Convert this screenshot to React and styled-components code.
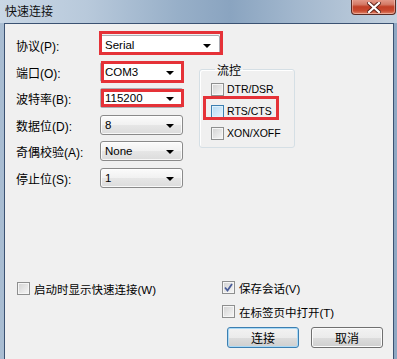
import React from "react"
import styled, { createGlobalStyle, css } from "styled-components"

const GlobalStyle = createGlobalStyle`
  html, body {
    margin: 0;
    padding: 0;
    background: #8ea7c2;
  }
  body {
    font-family: "Liberation Sans", "Noto Sans CJK SC", sans-serif;
    font-size: 12px;
    color: #000;
  }
`

const Combo = ({ value, width, editable, mark }) => (
  <ComboBox $width={width} $editable={editable}>
    <span>{value}</span>
    <Arrow />
    {mark && <RedMark {...mark} />}
  </ComboBox>
)

const CheckBox = ({ label, checked, hot, small, mark }) => (
  <CheckRow $small={small}>
    <Box $hot={hot}>
      {checked && (
        <svg width="9" height="9" viewBox="0 0 9 9">
          <path d="M1 4.5 L3.5 7.5 L8 1" fill="none" stroke="#4a5d99" strokeWidth="1.8" />
        </svg>
      )}
    </Box>
    <span>{label}</span>
    {mark && <RedMark {...mark} />}
  </CheckRow>
)

const App = () => {
  return (
    <Window>
      <GlobalStyle />
      <TitleBar>
        <Title>快速连接</Title>
        <CloseButton>
          <svg width="14" height="11" viewBox="0 0 14 11">
            <path d="M2 1 L12 10 M12 1 L2 10" stroke="#5b2219" strokeWidth="4" strokeLinecap="square" />
            <path d="M2 1 L12 10 M12 1 L2 10" stroke="#fff" strokeWidth="2.2" strokeLinecap="square" />
          </svg>
        </CloseButton>
      </TitleBar>
      <Body>
        <FormGrid>
          <Label>协议(P):</Label>
          <Combo value="Serial" width={120} editable mark={{ left: -2, top: -5, width: 124, height: 24 }} />
          <Label>端口(O):</Label>
          <Combo value="COM3" width={83} editable mark={{ left: 0, top: -2, width: 83, height: 22 }} />
          <Label>波特率(B):</Label>
          <Combo value="115200" width={83} editable mark={{ left: 0, top: 0, width: 83, height: 18 }} />
          <Label>数据位(D):</Label>
          <Combo value="8" width={83} />
          <Label>奇偶校验(A):</Label>
          <Combo value="None" width={83} />
          <Label>停止位(S):</Label>
          <Combo value="1" width={83} />

          <FlowGroup>
            <legend>流控</legend>
            <CheckBox small label="DTR/DSR" />
            <CheckBox small label="RTS/CTS" hot mark={{ left: -8, top: -9, width: 76, height: 24 }} />
            <CheckBox small label="XON/XOFF" />
          </FlowGroup>
        </FormGrid>

        <Bottom>
          <LeftOptions>
            <CheckBox label="启动时显示快速连接(W)" />
          </LeftOptions>
          <RightOptions>
            <CheckBox label="保存会话(V)" checked />
            <CheckBox label="在标签页中打开(T)" />
            <Buttons>
              <Button $primary>连接</Button>
              <Button>取消</Button>
            </Buttons>
          </RightOptions>
        </Bottom>
      </Body>
    </Window>
  )
}

const Window = styled.div`
  width: 397px;
  height: 359px;
  overflow: hidden;
  display: flex;
  flex-direction: column;
  background: linear-gradient(90deg, #a9bdd2 0%, #8fa8c3 100%);
`

const TitleBar = styled.div`
  height: 23px;
  flex: none;
  display: flex;
  justify-content: space-between;
  align-items: flex-start;
  background: linear-gradient(
    90deg,
    #c9d7e5 0%,
    #b8c9db 22%,
    #97afc8 45%,
    #8aa4c0 58%,
    #a3b8ce 75%,
    #c3d1df 100%
  );
`

const Title = styled.div`
  padding: 4px 0 0 5px;
  font-family: "Noto Sans CJK SC", sans-serif;
  font-size: 12px;
  line-height: 14px;
  color: #111;
`

const CloseButton = styled.div`
  width: 45px;
  height: 17px;
  margin: -2px 1px 0 0;
  display: flex;
  align-items: center;
  justify-content: center;
  padding-top: 2px;
  box-sizing: border-box;
  border: 1px solid #5a2a23;
  border-top: none;
  border-radius: 0 0 4px 4px;
  background: linear-gradient(180deg, #e9a596 0%, #d47a66 40%, #c13f26 55%, #c94a30 80%, #e0876c 100%);
  box-shadow: inset 0 0 0 1px rgba(255, 220, 210, 0.45);
`

const Body = styled.div`
  flex: 1;
  margin: 0 3px 0 4px;
  border: 1px solid #3b5272;
  border-bottom: none;
  background: #f0f0f0;
  position: relative;
  display: flex;
  flex-direction: column;
`

const FormGrid = styled.div`
  display: grid;
  grid-template-columns: 84px 99px 96px;
  grid-auto-rows: 20px;
  row-gap: 6.5px;
  padding: 11px 0 0 11px;
`

const Label = styled.div`
  grid-column: 1;
  display: flex;
  align-items: center;
  font-size: 12px;
  white-space: nowrap;
  padding-top: 1px;
`

const ComboBox = styled.div`
  grid-column: 2;
  position: relative;
  width: ${(p) => p.$width}px;
  height: 20px;
  box-sizing: border-box;
  display: flex;
  align-items: center;
  justify-content: space-between;
  padding: 0 8px 0 4px;
  font-family: "Liberation Sans", sans-serif;
  font-size: 11.5px;
  border: 1px solid #8a8a8a;
  border-radius: 3px;
  ${(p) =>
    p.$editable
      ? css`
          background: #fff;
          border-color: #abadb3;
          border-radius: 2px;
        `
      : css`
          background: linear-gradient(180deg, #fbfbfb 0%, #f1f1f1 50%, #e6e6e6 52%, #dcdcdc 100%);
          box-shadow: inset 0 0 0 1px rgba(255, 255, 255, 0.8);
        `}
`

const Arrow = styled.span`
  width: 0;
  height: 0;
  border-left: 4px solid transparent;
  border-right: 4px solid transparent;
  border-top: 4px solid #000;
  margin-top: 2px;
`

const RedMark = styled.span`
  position: absolute;
  left: ${(p) => p.left}px;
  top: ${(p) => p.top}px;
  width: ${(p) => p.width}px;
  height: ${(p) => p.height}px;
  box-sizing: border-box;
  border: 3px solid #e53238;
  pointer-events: none;
`

const FlowGroup = styled.fieldset`
  grid-column: 3;
  grid-row: 2 / span 5;
  align-self: start;
  margin: 1px 0 0 0;
  padding: 6px 0 0 11px;
  height: 85px;
  box-sizing: border-box;
  border: 1px solid #d5dfe5;
  border-radius: 3px;
  box-shadow: inset 1px 1px 0 #fff;
  display: flex;
  flex-direction: column;
  gap: 9px;

  legend {
    font-family: "Noto Sans CJK SC", sans-serif;
    font-size: 12px;
    line-height: 14px;
    padding: 0 2px;
    margin-left: 4px;
  }
`

const CheckRow = styled.label`
  position: relative;
  display: flex;
  align-items: center;
  gap: ${(p) => (p.$small ? "3px" : "4px")};
  height: 13px;
  font-size: ${(p) => (p.$small ? "10.5px" : "11.5px")};
  white-space: nowrap;
`

const Box = styled.span`
  width: 13px;
  height: 13px;
  flex: none;
  box-sizing: border-box;
  display: flex;
  align-items: center;
  justify-content: center;
  border: 1px solid ${(p) => (p.$hot ? "#3c7fb1" : "#8e8f8f")};
  background: ${(p) =>
    p.$hot
      ? "linear-gradient(135deg, #b4d9f3 0%, #e6f4fd 100%)"
      : "linear-gradient(135deg, #d2d2d2 0%, #f7f7f7 100%)"};
  box-shadow: inset 0 0 0 1px ${(p) => (p.$hot ? "#def1fc" : "#f6f6f6")};
`

const Bottom = styled.div`
  margin-top: auto;
  display: flex;
  padding: 0 10px 11px 12px;
`

const LeftOptions = styled.div`
  width: 206px;
  padding-top: 1px;
`

const RightOptions = styled.div`
  flex: 1;
  display: flex;
  flex-direction: column;
  gap: 11px;
`

const Buttons = styled.div`
  display: flex;
  gap: 12px;
  padding-left: 5px;
  margin-top: -2px;
`

const Button = styled.button`
  width: 72px;
  height: 21px;
  padding: 0;
  font-family: "Noto Sans CJK SC", sans-serif;
  font-size: 12px;
  color: #000;
  border: 1px solid ${(p) => (p.$primary ? "#3c7fb1" : "#707070")};
  border-radius: 3px;
  background: linear-gradient(180deg, #f2f2f2 0%, #ebebeb 50%, #dddddd 51%, #cfcfcf 100%);
  box-shadow: inset 0 0 0 1px ${(p) => (p.$primary ? "#a9d9f6" : "#fbfbfb")};
`

export default App
